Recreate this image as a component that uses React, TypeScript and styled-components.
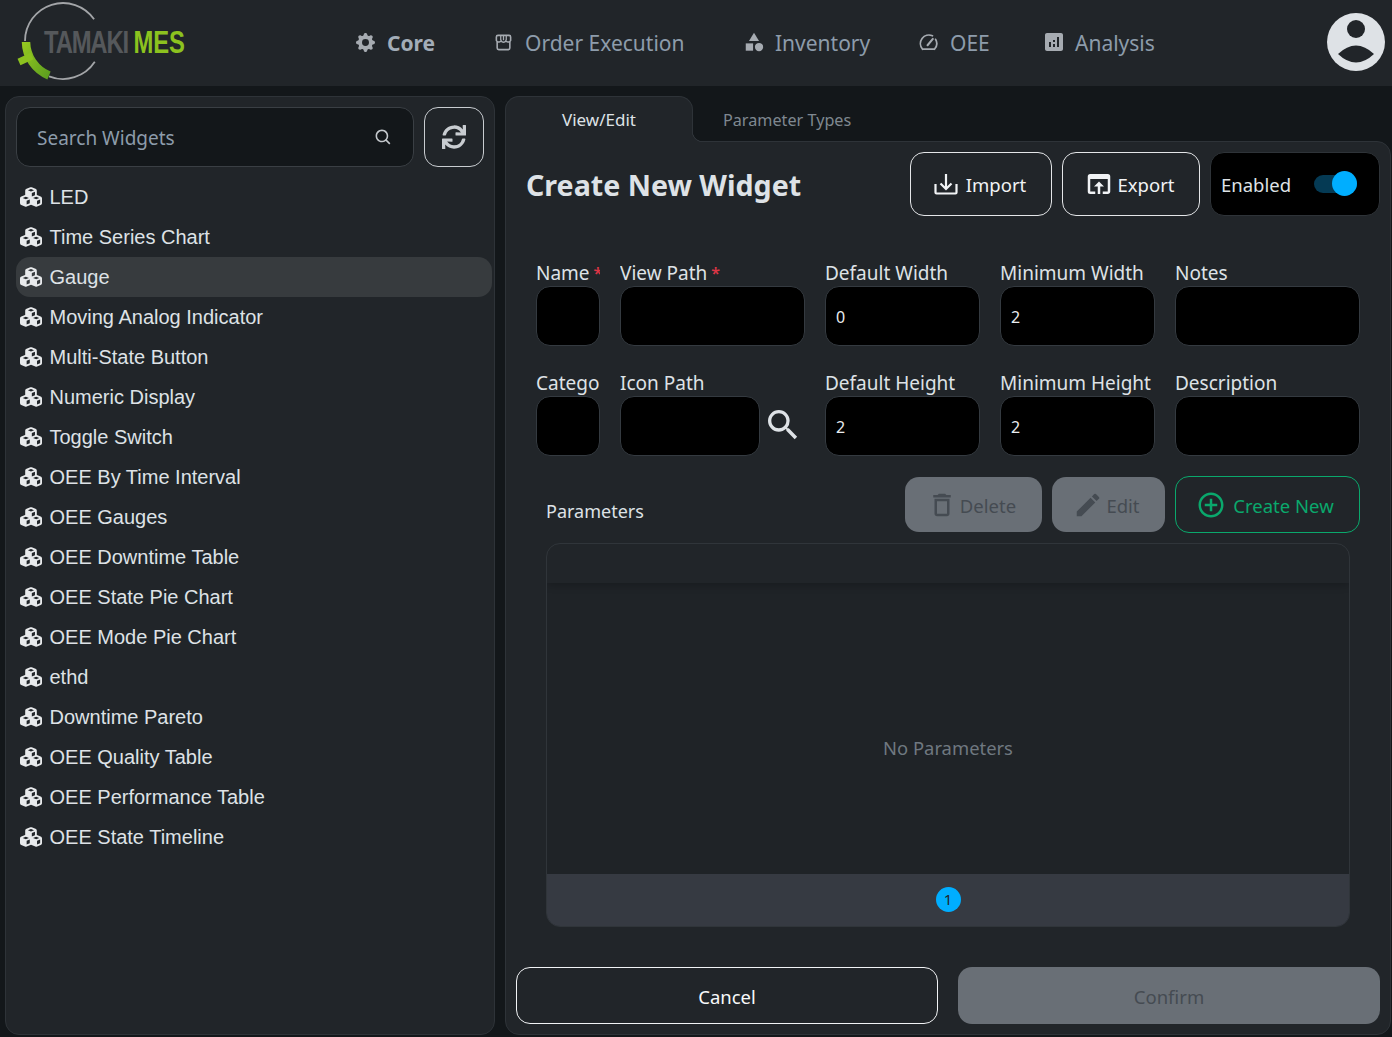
import React from "react";
import styled, { createGlobalStyle } from "styled-components";
import { FaCubes } from "react-icons/fa6";
import { FaSync } from "react-icons/fa";
import { BsGearFill } from "react-icons/bs";
import { MdCategory, MdAnalytics, MdOpenInBrowser, MdDeleteOutline, MdEdit, MdAddCircleOutline, MdSearch } from "react-icons/md";
import { BiSearch } from "react-icons/bi";

const Global = createGlobalStyle`
  html, body { margin: 0; padding: 0; background: #13171a; }
  body { font-family: "Noto Sans", "Open Sans", sans-serif; color: #dee2e6; }
  * { box-sizing: border-box; }
`;

const Page = styled.div`
  width: 1392px; height: 1037px; display: flex; flex-direction: column; overflow: hidden; background: #13171a;
`;
const Header = styled.header`
  height: 86px; flex: none; background: #212529; display: flex; align-items: center; padding: 0 6px 0 17px;
`;
const LogoBox = styled.svg`
  width: 170px; height: 84px; flex: none; display: block; align-self: flex-start;
`;
const Nav = styled.nav`
  display: flex; align-items: center; margin: 0 0 0 169px; flex: 1;
`;
const NavItem = styled.a<{ $w: number; $bold?: boolean }>`
  width: ${(p) => p.$w}px; display: flex; align-items: center; gap: 12px; flex: none;
  font-size: 21px; color: ${(p) => (p.$bold ? "#a3adb8" : "#8d9cab")}; font-weight: ${(p) => (p.$bold ? 700 : 400)};
  white-space: nowrap;
  svg { width: 19px; height: 19px; color: #a6abb1; flex: none; margin-top: -2px; }
`;
const NavMaterial = styled.span<{ $size: number }>`
  display: flex; flex: none; margin: 0 ${(p) => (19 - p.$size) / 2}px;
  svg { width: ${(p) => p.$size}px; height: ${(p) => p.$size}px; }
`;
const Avatar = styled.svg`
  width: 60px; height: 60px; flex: none; margin-bottom: 2px;
`;
const Body = styled.main`
  flex: 1; min-height: 0; display: flex; gap: 10px; padding: 10px 1px 2px 5px;
`;
const SidePanel = styled.aside`
  width: 490px; flex: none; background: #212529; border: 1px solid #2e3338; border-radius: 14px;
  padding: 10px 2px 0 10px; display: flex; flex-direction: column;
`;
const SearchRow = styled.div`
  display: flex; gap: 10px; padding-right: 8px; margin-bottom: 10px;
`;
const SearchBox = styled.div`
  flex: 1; height: 60px; background: #13171a; border: 1px solid #3a3f44; border-radius: 14px;
  display: flex; align-items: center; justify-content: space-between; padding: 2px 20px 0 20px;
  font-size: 19px; color: #8d9cab;
  svg { width: 19px; height: 19px; color: #c4c8cc; margin-top: -2px; }
`;
const IconButton = styled.button`
  width: 60px; height: 60px; flex: none; background: transparent; border: 1px solid #c8ccd0; border-radius: 14px;
  display: flex; align-items: center; justify-content: center; color: #c8ccd0; padding: 0;
  svg { width: 24px; height: 24px; }
`;
const WidgetList = styled.ul`
  list-style: none; margin: 0; padding: 0; display: flex; flex-direction: column;
`;
const WidgetRow = styled.li<{ $selected?: boolean }>`
  height: 40px; display: flex; align-items: center; gap: 7.5px; padding-left: 4px; border-radius: 14px;
  background: ${(p) => (p.$selected ? "#373b3e" : "transparent")};
  font-family: "Liberation Sans", Arial, sans-serif; font-size: 20px; color: #dee2e6;
  svg { width: 22px; height: 22px; flex: none; color: #e8eaec; }
`;
const MainColumn = styled.section`
  flex: 1; min-width: 0; display: flex; flex-direction: column;
`;
const Tabs = styled.div`
  height: 45px; flex: none; display: flex;
`;
const ActiveTab = styled.div`
  width: 188px; position: relative; background: #212529; border: 1px solid #2e3338; border-bottom: 0; border-radius: 14px 14px 0 0;
  display: flex; align-items: center; justify-content: center; font-size: 17px; color: #dee2e6;
  z-index: 1; margin-bottom: -1px;
  &::after {
    content: ""; position: absolute; right: -11px; bottom: 0; width: 11px; height: 11px;
    background: radial-gradient(circle at 100% 0, #13171a 10px, #2e3338 10.5px, #2e3338 11px, #212529 11.5px);
  }
`;
const IdleTab = styled.div`
  padding: 2px 0 0 30px; display: flex; align-items: center; font-size: 16.2px; color: #7f8890;
`;
const Panel = styled.div`
  flex: 1; min-height: 0; background: #212529; border: 1px solid #2e3338; border-radius: 0 14px 14px 14px;
  padding: 10px; display: flex; flex-direction: column;
`;
const TitleRow = styled.div`
  display: flex; align-items: center; height: 64px; flex: none; gap: 10px;
`;
const Title = styled.h1`
  margin: 0 auto 0 10px; font-size: 28.6px; font-weight: 700; color: #dee2e6;
`;
const OutlineButton = styled.button<{ $w: number }>`
  width: ${(p) => p.$w}px; height: 64px; background: transparent; border: 1px solid #e4e6e8; border-radius: 14px;
  color: #f1f3f5; font: inherit; font-size: 18.5px; display: flex; align-items: center; justify-content: center; gap: 8px; padding: 0;
  svg { width: 26px; height: 26px; flex: none; }
`;
const ButtonText = styled.span`
  padding-top: 1px;
`;
const ImportGlyph = styled.span`
  display: flex; margin: 0 -1px 0 -3px;
`;
const ExportGlyph = styled.span`
  display: flex; margin: 0 -4px;
  svg { width: 30px; height: 30px; }
`;
const EnabledBox = styled.div`
  width: 170px; height: 64px; background: #000; border-radius: 14px; border: 1px solid #2e3338;
  display: flex; align-items: center; justify-content: space-between; padding: 1px 22px 0 10px; font-size: 18.5px; color: #dee2e6;
`;
const Toggle = styled.span`
  width: 43px; height: 18px; border-radius: 9px; background: #053a54; position: relative; display: block; margin-top: -2px;
  &::after {
    content: ""; position: absolute; right: 0; top: -3.5px; width: 25px; height: 25px; border-radius: 50%; background: #00aeff;
  }
`;
const FormGrid = styled.div`
  display: grid; grid-template-columns: 64px 185px 155px 155px 185px; column-gap: 20px; row-gap: 24px;
  margin: 44px 0 0 20px; width: 824px;
`;
const Field = styled.div`
  display: flex; flex-direction: column; min-width: 0;
`;
const Label = styled.label`
  height: 26px; font-size: 19px; line-height: 26px; color: #dee2e6; white-space: nowrap; overflow: hidden;
`;
const Req = styled.span`
  color: #dc3545; margin-left: 4px; font-size: 16px; line-height: 0; font-weight: 600; vertical-align: 1px;
`;
const InputWrap = styled.div`
  display: flex; align-items: center; gap: 3px;
  svg { width: 40px; height: 40px; color: #dee2e6; flex: none; margin: -2px 2px 0 0; }
`;
const FakeInput = styled.div`
  flex: 1; height: 60px; background: #000; border: 1px solid #343a40; border-radius: 14px;
  display: flex; align-items: center; padding: 1px 10px 0; font-size: 16px; color: #e9ecef;
`;
const ParamsRow = styled.div`
  display: flex; align-items: center; gap: 10px; margin: 20px 20px 0 30px; height: 57px; flex: none;
`;
const ParamsLabel = styled.span`
  margin-right: auto; padding-top: 13px; font-size: 18px; color: #dee2e6;
`;
const DisabledButton = styled.button<{ $w: number }>`
  width: ${(p) => p.$w}px; height: 55px; background: #696f76; border: 0; border-radius: 14px; color: #454b52;
  font: inherit; font-size: 18.5px; display: flex; align-items: center; justify-content: center; gap: 3px; padding: 1px 4px 0 0;
  svg { width: 30px; height: 30px; flex: none; margin-top: -1px; }
`;
const CreateButton = styled.button`
  width: 185px; height: 57px; background: transparent; border: 1px solid #0aa86c; border-radius: 14px; color: #0aa86c;
  font: inherit; font-size: 18.5px; display: flex; align-items: center; justify-content: center; gap: 7px; padding: 1px 5px 0 0;
  svg { width: 30px; height: 30px; flex: none; margin-top: -1px; }
`;
const Table = styled.div`
  margin: 10px 30px 0 30px; height: 384px; flex: none; border: 1px solid #30353a; border-radius: 14px; overflow: hidden;
  display: flex; flex-direction: column;
`;
const TableHead = styled.div`
  height: 39px; flex: none; position: relative; box-shadow: 0 2px 8px rgba(0,0,0,.22);
`;
const TableBody = styled.div`
  flex: 1; display: flex; align-items: center; justify-content: center; font-size: 18.4px; color: #6f7880; background: #1f2327;
  padding-top: 38px;
`;
const TableFoot = styled.div`
  height: 52px; flex: none; background: #363a42; display: flex; align-items: center; justify-content: center; padding-bottom: 2px;
`;
const PageDot = styled.span`
  width: 25px; height: 25px; border-radius: 50%; background: #00aeff; color: #212529; font-size: 15px;
  display: flex; align-items: center; justify-content: center;
`;
const Footer = styled.div`
  margin-top: auto; display: grid; grid-template-columns: 1fr 1fr; gap: 20px;
`;
const CancelButton = styled.button`
  height: 57px; padding: 2px 0 0; background: transparent; border: 1px solid #f1f3f5; border-radius: 14px; color: #f8f9fa; font: inherit; font-size: 18.5px;
`;
const ConfirmButton = styled.button`
  height: 57px; padding: 2px 0 0; background: #696f76; border: 0; border-radius: 14px; color: #454b52; font: inherit; font-size: 18.5px;
`;

const widgets = ["LED","Time Series Chart","Gauge","Moving Analog Indicator","Multi-State Button","Numeric Display","Toggle Switch","OEE By Time Interval","OEE Gauges","OEE Downtime Table","OEE State Pie Chart","OEE Mode Pie Chart","ethd","Downtime Pareto","OEE Quality Table","OEE Performance Table","OEE State Timeline"];

function Logo() {
  return (
    <LogoBox viewBox="17 0 170 84">
      <defs>
        <linearGradient id="g" x1="0" y1="0" x2="1" y2="1">
          <stop offset="0" stopColor="#93c720" />
          <stop offset="1" stopColor="#5d9e1f" />
        </linearGradient>
      </defs>
      <path d="M94.1 19.2 A38 38 0 0 0 25 41" fill="none" stroke="#a3a5a8" strokeWidth="1.8" />
      <path d="M49 76.3 A38 38 0 0 0 94.8 61.8" fill="none" stroke="#a3a5a8" strokeWidth="1.8" />
      <path d="M26 42 A37 37 0 0 0 49 75.5" fill="none" stroke="url(#g)" strokeWidth="8.5" />
      <path d="M19 62 L32 56" fill="none" stroke="#8cc21f" strokeWidth="7" />
      <text x="44" y="52.5" fontFamily="'Liberation Sans', sans-serif" fontWeight="700" fontSize="31" textLength="141" lengthAdjust="spacingAndGlyphs">
        <tspan fill="#55585b" letterSpacing="-1.5">TAMAKI </tspan>
        <tspan fill="#8cc21f">MES</tspan>
      </text>
    </LogoBox>
  );
}

const ImportIcon = () => (
  <svg viewBox="0 0 26 26" fill="none" stroke="currentColor" strokeWidth="2.2">
    <path d="M13 3v15M7.5 12.5 13 18l5.5-5.5" />
    <path d="M2.5 14v8.5a1 1 0 0 0 1 1h19a1 1 0 0 0 1-1V14" transform="translate(0 -1)" />
  </svg>
);

const StoreIcon = () => (
  <svg viewBox="0 0 24 24" fill="none" stroke="currentColor" strokeWidth="2">
    <path d="M5 3h14a2 2 0 0 1 2 2v4.5a3 3 0 0 1-3 1.8 3 3 0 0 1-3-1.3 3.5 3.5 0 0 1-6 0 3 3 0 0 1-3 1.3 3 3 0 0 1-3-1.8V5a2 2 0 0 1 2-2Z" />
    <path d="M8.5 3.5V9M12 3.5V9M15.5 3.5V9" strokeWidth="1.6" />
    <path d="M4 11v8a2 2 0 0 0 2 2h12a2 2 0 0 0 2-2v-8" />
  </svg>
);

const GaugeIcon = () => (
  <svg viewBox="0 0 24 24" fill="none" stroke="currentColor" strokeWidth="2.2" strokeLinecap="round">
    <path d="M4.5 20.5h15 M4.5 20.5 A10.8 10.8 0 0 1 17 3.5 M21 8 A10.8 10.8 0 0 1 19.5 20.5" />
    <path d="M10.8 15.5 17.5 7.5" strokeWidth="2.6" />
  </svg>
);

export default function App() {
  return (
    <Page>
      <Global />
      <Header>
        <Logo />
        <Nav>
          <NavItem $w={138} $bold><BsGearFill />Core</NavItem>
          <NavItem $w={250}><StoreIcon />Order Execution</NavItem>
          <NavItem $w={175}><NavMaterial $size={22}><MdCategory /></NavMaterial>Inventory</NavItem>
          <NavItem $w={125}><GaugeIcon />OEE</NavItem>
          <NavItem $w={120}><NavMaterial $size={24}><MdAnalytics /></NavMaterial>Analysis</NavItem>
        </Nav>
        <Avatar viewBox="0 0 60 60">
          <circle cx="30" cy="30" r="29" fill="#dee2e6" />
          <circle cx="30" cy="17" r="9" fill="#212529" />
          <path d="M12 42 Q30 25 48 42 Q30 59 12 42Z" fill="#212529" />
        </Avatar>
      </Header>
      <Body>
        <SidePanel>
          <SearchRow>
            <SearchBox>Search Widgets<BiSearch /></SearchBox>
            <IconButton aria-label="Refresh"><FaSync /></IconButton>
          </SearchRow>
          <WidgetList>
            {widgets.map((w) => (
              <WidgetRow key={w} $selected={w === "Gauge"}><FaCubes />{w}</WidgetRow>
            ))}
          </WidgetList>
        </SidePanel>
        <MainColumn>
          <Tabs>
            <ActiveTab>View/Edit</ActiveTab>
            <IdleTab>Parameter Types</IdleTab>
          </Tabs>
          <Panel>
            <TitleRow>
              <Title>Create New Widget</Title>
              <OutlineButton $w={142}><ImportGlyph><ImportIcon /></ImportGlyph><ButtonText>Import</ButtonText></OutlineButton>
              <OutlineButton $w={138}><ExportGlyph><MdOpenInBrowser /></ExportGlyph><ButtonText>Export</ButtonText></OutlineButton>
              <EnabledBox>Enabled<Toggle /></EnabledBox>
            </TitleRow>
            <FormGrid>
              <Field><Label>Name<Req>*</Req></Label><InputWrap><FakeInput /></InputWrap></Field>
              <Field><Label>View Path<Req>*</Req></Label><InputWrap><FakeInput /></InputWrap></Field>
              <Field><Label>Default Width</Label><InputWrap><FakeInput>0</FakeInput></InputWrap></Field>
              <Field><Label>Minimum Width</Label><InputWrap><FakeInput>2</FakeInput></InputWrap></Field>
              <Field><Label>Notes</Label><InputWrap><FakeInput /></InputWrap></Field>
              <Field><Label>Category</Label><InputWrap><FakeInput /></InputWrap></Field>
              <Field><Label>Icon Path</Label><InputWrap><FakeInput /><MdSearch /></InputWrap></Field>
              <Field><Label>Default Height</Label><InputWrap><FakeInput>2</FakeInput></InputWrap></Field>
              <Field><Label>Minimum Height</Label><InputWrap><FakeInput>2</FakeInput></InputWrap></Field>
              <Field><Label>Description</Label><InputWrap><FakeInput /></InputWrap></Field>
            </FormGrid>
            <ParamsRow>
              <ParamsLabel>Parameters</ParamsLabel>
              <DisabledButton $w={137}><MdDeleteOutline />Delete</DisabledButton>
              <DisabledButton $w={113}><MdEdit />Edit</DisabledButton>
              <CreateButton><MdAddCircleOutline />Create New</CreateButton>
            </ParamsRow>
            <Table>
              <TableHead />
              <TableBody>No Parameters</TableBody>
              <TableFoot><PageDot>1</PageDot></TableFoot>
            </Table>
            <Footer>
              <CancelButton>Cancel</CancelButton>
              <ConfirmButton>Confirm</ConfirmButton>
            </Footer>
          </Panel>
        </MainColumn>
      </Body>
    </Page>
  );
}
